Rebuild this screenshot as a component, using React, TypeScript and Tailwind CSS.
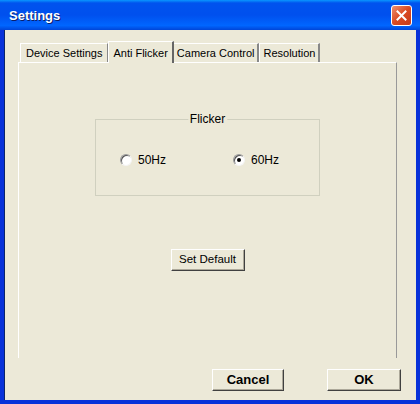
import React from "react";

const font = { fontFamily: '"Liberation Sans", Arial, sans-serif' };

function Radio({ checked, label }: { checked?: boolean; label: string }) {
  return (
    <div className="flex items-center gap-[6px]">
      <div className="w-[12px] h-[12px] rounded-full bg-white border border-t-[#9a9a9a] border-l-[#9a9a9a] border-r-[#f4f4f4] border-b-[#f4f4f4] flex items-center justify-center shadow-[inset_1px_1px_0_#555]">
        {checked && <div className="w-[4px] h-[4px] rounded-full bg-black" />}
      </div>
      <span className="text-[12px] text-black">{label}</span>
    </div>
  );
}

function Btn({ children, bold, w }: { children: React.ReactNode; bold?: boolean; w: string }) {
  return (
    <div
      className={`${w} h-[22px] bg-[#ECE9D8] border border-t-white border-l-white border-r-[#404040] border-b-[#404040] shadow-[inset_-1px_-1px_0_#ACA899] flex items-center justify-center text-black ${bold ? "font-bold text-[13px]" : "text-[11.5px]"}`}
    >
      {children}
    </div>
  );
}

export default function App() {
  return (
    <div style={font} className="w-[420px] h-[404px] bg-[#0831D9] flex flex-col">
      <div className="h-[30px] flex items-center justify-between pl-[9px] pr-[8px] pt-[1px] bg-[linear-gradient(to_bottom,#0997FF_0%,#0053EE_10%,#0050EE_50%,#0066FF_85%,#0045D8_100%)]">
        <span className="text-white font-bold text-[13px] [text-shadow:1px_1px_0_#0A1E6A]">Settings</span>
        <div className="w-[21px] h-[21px] rounded-[3px] border border-white bg-[linear-gradient(135deg,#EE9070,#DA4A22_50%,#C53C1C)] flex items-center justify-center">
          <svg width="11" height="11" viewBox="0 0 11 11">
            <path d="M1.5 1.5 L9.5 9.5 M9.5 1.5 L1.5 9.5" stroke="white" strokeWidth="2" strokeLinecap="square" />
          </svg>
        </div>
      </div>
      <div className="flex-1 mx-[4px] mb-[4px] bg-[#ECE9D8] border-l border-[#0A246A] flex flex-col pl-[13px] pr-[15px] pt-[10px]">
        <div className="flex items-end h-[22px] text-[11px] text-black">
          <div className="h-[19px] px-[5px] flex items-center border-t border-l border-white border-r border-r-[#888] ml-[2px]">Device Settings</div>
          <div className="h-[22px] px-[4px] flex items-start pt-[3px] border-t border-l border-white border-r-2 border-r-[#666] bg-[#ECE9D8] relative -mb-px z-10">Anti Flicker</div>
          <div className="h-[19px] px-[3px] flex items-center border-t border-white border-r-2 border-r-[#888]">Camera Control</div>
          <div className="h-[19px] px-[3px] flex items-center border-t border-l border-white border-r-2 border-r-[#888]">Resolution</div>
        </div>
        <div className="h-[296px] mr-[4px] border-t border-l border-white border-r border-r-[#999] flex flex-col items-center">
          <div className="mt-[56px] ml-[0px] w-[225px] h-[77px] border border-[#D0D0BF] relative flex items-center justify-between pl-[24px] pr-[40px] pt-[4px]">
            <span className="absolute -top-[8px] left-1/2 -translate-x-1/2 bg-[#ECE9D8] px-[2px] text-[12px] leading-[14px] text-black">Flicker</span>
            <Radio label="50Hz" />
            <Radio label="60Hz" checked />
          </div>
          <div className="mt-[53px] ml-[0px]">
            <Btn w="w-[74px]">Set Default</Btn>
          </div>
        </div>
        <div className="flex justify-end gap-[43px] mt-[11px]">
          <Btn w="w-[72px]" bold>Cancel</Btn>
          <Btn w="w-[74px]" bold>OK</Btn>
        </div>
      </div>
    </div>
  );
}
